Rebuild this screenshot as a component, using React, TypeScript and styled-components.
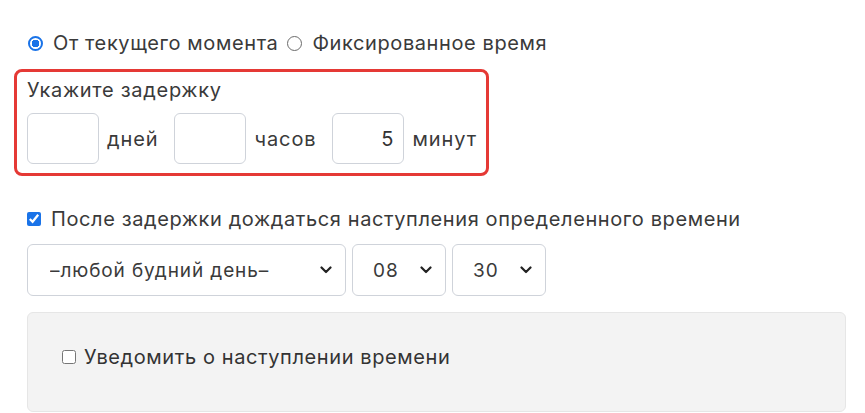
import styled, { createGlobalStyle } from 'styled-components';

const GlobalStyle = createGlobalStyle`
  body {
    margin: 0;
    background: #ffffff;
    font-family: Inter, "Noto Sans", sans-serif;
    color: #333333;
  }
`;

const Page = styled.div`
  padding: 29px 20px 0 27px;
  display: flex;
  flex-direction: column;
`;

const Row = styled.div<{ $gap?: number }>`
  display: flex;
  align-items: center;
  gap: ${(p) => p.$gap ?? 8}px;
`;

const Choice = styled.label`
  display: inline-flex;
  align-items: center;
  gap: 10px;
  font-size: 20px;
  line-height: 28px;
  letter-spacing: 0.6px;
  color: #3a3a3a;
  margin-right: 8px;

  input {
    margin: 0 0 0 1px;
    width: 15px;
    height: 15px;
    accent-color: #1a73e8;
  }
`;

const Radio = styled.input.attrs({ type: 'radio' })`
  appearance: none;
  margin: 0 0 0 1px;
  width: 15px;
  height: 15px;
  box-sizing: border-box;
  border-radius: 50%;
  border: 1.5px solid #6b6b6b;
  background: #fff;

  &:checked {
    border: 2px solid #1a73e8;
    background: radial-gradient(circle, #1a73e8 0 3.6px, #fff 4px);
  }
`;

const DelayBox = styled.div`
  margin: 12px 0 0 -13px;
  width: 475px;
  box-sizing: border-box;
  border: 3px solid #e53935;
  border-radius: 8px;
  padding: 4px 10px 9px;
  display: flex;
  flex-direction: column;
  gap: 9px;
`;

const Label = styled.div`
  font-size: 20px;
  line-height: 28px;
  color: #3a3a3a;
  letter-spacing: 0.7px;
`;

const NumberInput = styled.input`
  width: 72px;
  height: 51px;
  box-sizing: border-box;
  border: 1px solid #cfd3da;
  border-radius: 6px;
  padding: 0 10px;
  font: inherit;
  font-size: 20px;
  color: #333;
  text-align: right;
  outline: none;
`;

const Unit = styled.span`
  font-size: 20px;
  color: #3a3a3a;
  letter-spacing: 0.9px;
  margin-right: 8px;
`;

const WaitRow = styled(Choice)`
  margin-top: 29px;

  input {
    margin: 0;
    width: 14px;
    height: 14px;
    border-radius: 3px;
  }
`;

const Select = styled.select<{ $width: number }>`
  appearance: none;
  width: ${(p) => p.$width}px;
  height: 52px;
  box-sizing: border-box;
  border: 1px solid #cfd3da;
  border-radius: 6px;
  padding: 0 30px 0 ${(p) => (p.$width > 200 ? 22 : 20)}px;
  font-family: inherit;
  font-size: 19px;
  letter-spacing: 0.9px;
  color: #3a3a3a;
  background: #fff
    url("data:image/svg+xml,%3Csvg xmlns='http://www.w3.org/2000/svg' width='12' height='8' viewBox='0 0 12 8'%3E%3Cpath d='M1.5 1.5 6 6l4.5-4.5' fill='none' stroke='%23222' stroke-width='2.2' stroke-linecap='round' stroke-linejoin='round'/%3E%3C/svg%3E")
    no-repeat right 13px center;
  outline: none;
`;

const SelectRow = styled(Row)`
  margin-top: 11px;
  gap: 6px;
`;

const NotifyPanel = styled.div`
  margin-top: 16px;
  width: 819px;
  height: 100px;
  box-sizing: border-box;
  background: #f3f3f3;
  border: 1px solid #e6e6e6;
  border-radius: 6px;
  padding: 0 34px 10px;
  display: flex;
  align-items: center;
`;

const NotifyLabel = styled.label`
  display: inline-flex;
  align-items: center;
  gap: 8px;
  font-size: 20px;
  letter-spacing: 0.6px;
  color: #333;

  input {
    margin: 0;
    width: 14px;
    height: 14px;
  }
`;

export default function App() {
  return (
    <>
      <GlobalStyle />
      <Page>
        <Row $gap={0}>
          <Choice>
            <Radio name="mode" defaultChecked />
            От текущего момента
          </Choice>
          <Choice>
            <Radio name="mode" />
            Фиксированное время
          </Choice>
        </Row>

        <DelayBox>
          <Label>Укажите задержку</Label>
          <Row>
            <NumberInput defaultValue="" />
            <Unit>дней</Unit>
            <NumberInput defaultValue="" />
            <Unit>часов</Unit>
            <NumberInput defaultValue="5" />
            <Unit>минут</Unit>
          </Row>
        </DelayBox>

        <div>
          <WaitRow>
            <input type="checkbox" defaultChecked />
            После задержки дождаться наступления определенного времени
          </WaitRow>
        </div>

        <SelectRow>
          <Select $width={319} defaultValue="weekday">
            <option value="weekday">–любой будний день–</option>
          </Select>
          <Select $width={94} defaultValue="08">
            <option value="08">08</option>
          </Select>
          <Select $width={94} defaultValue="30">
            <option value="30">30</option>
          </Select>
        </SelectRow>

        <NotifyPanel>
          <NotifyLabel>
            <input type="checkbox" />
            Уведомить о наступлении времени
          </NotifyLabel>
        </NotifyPanel>
      </Page>
    </>
  );
}
